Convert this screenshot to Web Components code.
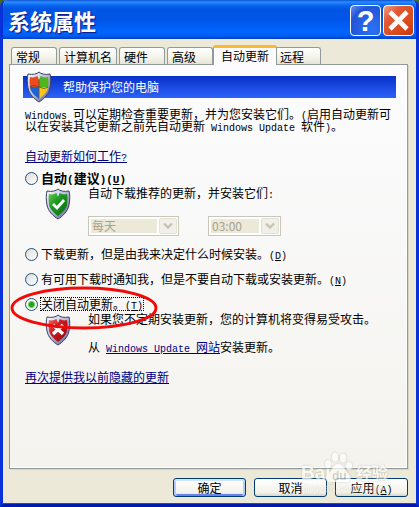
<!DOCTYPE html>
<html lang="zh-CN">
<head>
<meta charset="utf-8">
<meta name="viewport" content="width=device-width, initial-scale=1">
<title>系统属性</title>
<style>
  html, body { height: 100%; }
  body {
    margin: 0;
    background: #40682c;
    color: #000;
    font: 12px/14px "Noto Sans CJK SC", sans-serif;
  }
  p { margin: 0; }
  a { color: #000080; text-decoration: underline; }
  /* half-width latin, 6px per character; must not stretch the line box */
  .en { font-family: "Liberation Mono", monospace; font-size: 10px; line-height: 0; }
  .intro { margin-top: 10px; line-height: 12px; }
  .how { margin-top: 17px; }
  .first { margin-top: 8px; font-size: 13px; font-weight: bold; }
  .first .en { font-size: 11px; }
  .row { margin-top: 11px; }
  .schedule { display: flex; gap: 29px; margin-top: 16px; }
  .visit { margin-top: 14px; }
  .hidden-updates { margin-top: 16px; }
</style>
</head>
<body>

<xp-window heading="系统属性">
  <xp-tabs slot="tabs">
    <xp-tab>常规</xp-tab>
    <xp-tab>计算机名</xp-tab>
    <xp-tab>硬件</xp-tab>
    <xp-tab>高级</xp-tab>
    <xp-tab active>自动更新</xp-tab>
    <xp-tab>远程</xp-tab>
  </xp-tabs>

  <xp-banner>帮助保护您的电脑</xp-banner>
  <p class="intro"><span class="en">Windows </span>可以定期检查重要更新，并为您安装它们。<span class="en">(</span>启用自动更新可以在安装其它更新之前先自动更新<span class="en"> Windows Update </span>软件<span class="en">)</span>。</p>
  <p class="how"><a href="#how">自动更新如何工作<span class="en">?</span></a></p>

  <xp-options>
    <xp-radio class="first" value="auto">自动<span class="en">(</span>建议<span class="en">)(<u>U</u>)</span></xp-radio>
    <xp-detail kind="ok">
      <p>自动下载推荐的更新，并安装它们<span class="en">:</span></p>
      <div class="schedule">
        <xp-select name="日期" value="每天" size="large"></xp-select>
        <xp-select name="时间" value="03:00"></xp-select>
      </div>
    </xp-detail>
    <xp-radio class="row" value="download">下载更新，但是由我来决定什么时候安装。<span class="en">(<u>D</u>)</span></xp-radio>
    <xp-radio class="row" value="notify">有可用下载时通知我，但是不要自动下载或安装更新。<span class="en">(<u>N</u>)</span></xp-radio>
    <xp-radio class="row" value="off" checked circled>关闭自动更新。<span class="en">(<u>T</u>)</span></xp-radio>
    <xp-detail kind="bad">
      <p>如果您不定期安装更新，您的计算机将变得易受攻击。</p>
      <p class="visit">从<span class="en"> </span><a href="#update"><span class="en">Windows Update </span>网站</a>安装更新。</p>
    </xp-detail>
  </xp-options>
  <p class="hidden-updates"><a href="#hidden">再次提供我以前隐藏的更新</a></p>

  <xp-button slot="actions" primary>确定</xp-button>
  <xp-button slot="actions">取消</xp-button>
  <xp-button slot="actions">应用<span class="en">(<u>A</u>)</span></xp-button>
  <xp-watermark slot="mark"></xp-watermark>
</xp-window>

<script>
(function () {
  "use strict";

  function define(name, render, ready) {
    customElements.define(name, class extends HTMLElement {
      connectedCallback() {
        if (this.shadowRoot) return;
        const root = this.attachShadow({ mode: "open" });
        root.innerHTML = render(this);
        if (ready) ready(this, root);
      }
    });
  }

  const SHIELD = "M13 1C15 3 19 4 24 3C25 6 25 12 24 17C23 23 18 28 13 31C8 28 3 23 2 17C1 12 1 6 2 3C7 4 11 3 13 1Z";
  const SHIELD_IN = "M13 4C16 6 19 7 22 6C23 10 22 14 22 17C21 21 17 25 13 28C9 25 5 21 4 17C4 14 3 10 4 6C7 7 10 6 13 4Z";

  define("xp-shield", (el) => {
    const kind = el.getAttribute("kind");
    let art = "";
    if (kind === "ok") {
      art = `<path d="${SHIELD_IN}" fill="url(#g)"/>
        <path d="M8 16L12 20L19 12" fill="none" stroke="#fff" stroke-width="2.8"/>`;
    } else if (kind === "bad") {
      art = `<path d="${SHIELD_IN}" fill="url(#r)"/>
        <path d="M8 11L18 20M18 11L8 20" fill="none" stroke="#fff" stroke-width="3.4"/>`;
    } else {
      art = `<g clip-path="url(#c)">
        <path d="M2 2H13V16H2Z" fill="#ee4b1c"/>
        <path d="M13 2H24V16H13Z" fill="#4fb51c"/>
        <path d="M2 16H13V30H2Z" fill="#1c62d8"/>
        <path d="M13 16H24V30H13Z" fill="#fcc414"/>
        <path d="M3 16Q8 13 13 16T23 16M13 3V29" fill="none" stroke="#5a4a38" stroke-width=".8"/></g>`;
    }
    return `
      <style>
        :host { display: block; flex: none; width: 26px; height: 32px; }
        svg { display: block; }
      </style>
      <svg width="26" height="32" viewBox="0 0 26 32" aria-hidden="true">
        <defs>
          <clipPath id="c"><path d="${SHIELD_IN}"/></clipPath>
          <linearGradient id="s" x2="1" y2="1"><stop stop-color="#fff"/><stop offset=".5" stop-color="#b4b8d8"/><stop offset="1" stop-color="#585c88"/></linearGradient>
          <linearGradient id="g" x2="1" y2="1"><stop stop-color="#6ccc50"/><stop offset=".4" stop-color="#1d9a22"/><stop offset="1" stop-color="#056c0c"/></linearGradient>
          <linearGradient id="r" x2="1" y2="1"><stop stop-color="#f0706a"/><stop offset=".4" stop-color="#cc1c20"/><stop offset="1" stop-color="#8c0610"/></linearGradient>
        </defs>
        <path d="${SHIELD}" fill="url(#s)" stroke="#3c3f5c"/>
        ${art}
        <path d="M11 4L13 2L15 4L13 9Z" fill="#d8dcf0"/>
      </svg>`;
  });

  define("xp-window", (el) => `
    <style>
      :host {
        box-sizing: border-box;
        display: flex;
        flex-direction: column;
        position: relative;
        min-height: 100vh;
        border: solid #0831d9;
        border-width: 0 3px 3px;
        border-bottom-color: #0019b0;
        border-radius: 7px 7px 0 0;
        background: #ece9d8;
        box-shadow: inset 0 -1px #0050ee;
        overflow: hidden;
      }
      header {
        display: flex;
        align-items: center;
        gap: 2px;
        height: 39px;
        margin: 0 -3px;
        padding: 0 5px 0 8px;
        box-sizing: border-box;
        background: linear-gradient(#0a4fd0 0, #2b8cff 2px, #0a68f0 5px, #0054e3 9px, #0056e8 20px, #0066ff 32px, #005cf0 36px, #003fc4);
        color: #fff;
      }
      h1 {
        flex: 1;
        margin: 0;
        font-size: 22px;
        line-height: 30px;
        text-shadow: 1px 1px 1px #0a1883;
      }
      header button {
        width: 31px;
        height: 31px;
        margin-top: 2px;
        padding: 0;
        border: 1px solid #fff;
        border-radius: 4px;
        color: #fff;
        font: bold 29px/28px "Liberation Sans", sans-serif;
      }
      .help { background: radial-gradient(circle at 75% 80%, #2a72f4, #2355d8 70%, #6c92f0); }
      .close { background: linear-gradient(135deg, #f0a088, #e05a34 30%, #d84818 75%, #b83a14); }
      .close svg { display: block; margin: auto; }
      main {
        flex: 1;
        display: flex;
        flex-direction: column;
        padding: 6px 8px 7px 6px;
      }
      section {
        flex: 1;
        border: 1px solid #919b9c;
        padding: 11px 11px 10px 15px;
        background: linear-gradient(#fcfcfe, #f4f3ee);
        box-shadow: 1px 1px #d8d4c0, inset -1px -1px #fff;
      }
      footer {
        display: flex;
        justify-content: flex-end;
        gap: 8px;
        margin-top: 9px;
      }
    </style>
    <header>
      <h1>${el.getAttribute("heading")}</h1>
      <button class="help" aria-label="帮助">?</button>
      <button class="close" aria-label="关闭"><svg width="21" height="21" viewBox="0 0 21 21"><path d="M2 2L19 19M19 2L2 19" stroke="#fff" stroke-width="4.6"/></svg></button>
    </header>
    <main>
      <slot name="tabs"></slot>
      <section><slot></slot></section>
      <footer><slot name="actions"></slot></footer>
    </main>
    <slot name="mark"></slot>`);

  define("xp-tabs", () => `
    <style>
      :host {
        display: flex;
        align-items: flex-end;
        gap: 2px;
        height: 20px;
        margin-bottom: -1px;
        padding-left: 2px;
        position: relative;
      }
    </style>
    <slot></slot>`, (el) => el.setAttribute("role", "tablist"));

  define("xp-tab", (el) => `
    <style>
      :host { display: block; padding-bottom: 1px; }
      button {
        display: block;
        min-width: 46px;
        height: 17px;
        padding: 1px 4px 0;
        border: 1px solid #919b9c;
        border-bottom: 0;
        border-radius: 3px 3px 0 0;
        background: linear-gradient(#fff, #f4f3ea 60%, #e6e4d8);
        color: inherit;
        font: inherit;
        line-height: 14px;
        text-align: left;
        white-space: nowrap;
      }
      :host([active]) { position: relative; z-index: 1; margin: 0 -4px 0 -2px; padding: 0; }
      :host([active]) button {
        height: 20px;
        padding: 0 7px 2px;
        border-top: 3px solid #fcb92c;
        background: #fcfcfe;
      }
    </style>
    <button role="tab" aria-selected="${el.hasAttribute("active")}"><slot></slot></button>`);

  define("xp-banner", () => `
    <style>
      :host {
        display: flex;
        align-items: center;
        gap: 11px;
        height: 22px;
        margin-left: -2px;
        padding-left: 3px;
        background: linear-gradient(#0831c8, #2c62fa);
        color: #fff;
      }
    </style>
    <xp-shield></xp-shield>
    <slot></slot>`);

  define("xp-options", () => `
    <style>:host { display: block; }</style>
    <slot></slot>`, (el) => {
    el.setAttribute("role", "radiogroup");
    // each radio lives in its own shadow tree, so exclusivity is handled here
    el.addEventListener("xp-pick", (e) => {
      el.querySelectorAll("xp-radio").forEach((r) => {
        r.shadowRoot.querySelector("input").checked = r === e.target;
      });
    });
  });

  define("xp-radio", (el) => `
    <style>
      :host { display: block; position: relative; }
      label { display: flex; align-items: center; gap: 2px; line-height: 14px; }
      input {
        appearance: none;
        flex: none;
        width: 13px;
        height: 13px;
        margin: 0;
        border: 1px solid #1d5281;
        border-radius: 50%;
        background: linear-gradient(135deg, #dcdcd7, #fff);
      }
      input:checked {
        background: radial-gradient(circle, #21a121 0 2px, #55d551 3px, #f6f6f2 4px);
      }
      span { padding: 0 1px; white-space: nowrap; }
      :host([circled]) span { outline: 1px dotted #000; outline-offset: -1px; }
      svg { position: absolute; left: -16px; top: -12px; pointer-events: none; z-index: 1; }
    </style>
    <label><input type="radio" name="mode" value="${el.getAttribute("value")}" ${el.hasAttribute("checked") ? "checked" : ""}><span><slot></slot></span></label>
    ${el.hasAttribute("circled") ? `<svg width="150" height="46" viewBox="0 0 150 46" aria-hidden="true"><ellipse cx="75" cy="23" rx="72" ry="20" fill="none" stroke="#f00a0a" stroke-width="3"/></svg>` : ""}`,
  (el, root) => {
    root.querySelector("input").addEventListener("change", () => {
      el.dispatchEvent(new CustomEvent("xp-pick", { bubbles: true }));
    });
  });

  define("xp-detail", (el) => `
    <style>
      :host { display: flex; gap: 17px; padding: 1px 0 0 20px; }
      xp-shield { margin-top: 2px; }
      div { flex: 1; min-width: 0; }
    </style>
    <xp-shield kind="${el.getAttribute("kind")}"></xp-shield>
    <div><slot></slot></div>`);

  define("xp-select", (el) => `
    <style>
      :host {
        display: flex;
        box-sizing: border-box;
        position: relative;
        width: 73px;
        height: 20px;
        padding: 1px;
        border: 1px solid #c9c7ba;
        background: #fff;
      }
      :host([size="large"]) { width: 91px; }
      select {
        appearance: none;
        flex: 1;
        min-width: 0;
        margin: 1px;
        padding: 0 0 0 1px;
        border: 0;
        border-radius: 0;
        background: #ece9d8;
        color: #a5a291;
        opacity: 1;
        font: 12px/14px "Noto Sans CJK SC", sans-serif;
      }
      svg { flex: none; margin-left: 1px; }
    </style>
    <select disabled aria-label="${el.getAttribute("name")}"><option>${el.getAttribute("value")}</option></select>
    <svg width="18" height="16" viewBox="0 0 18 16" aria-hidden="true"><rect x=".5" y=".5" width="17" height="15" rx="1.5" fill="#f0efe8" stroke="#e3e1d6"/><path d="M5 5.5L9 9.5L13 5.5" fill="none" stroke="#c5c3b6" stroke-width="2.4"/></svg>`);

  define("xp-button", () => `
    <style>
      :host { display: block; }
      button {
        display: block;
        width: 73px;
        height: 19px;
        padding: 0;
        border: 1px solid #003c74;
        border-radius: 3px;
        background: linear-gradient(#fff, #f3f2ea 80%, #d8d2c4);
        color: inherit;
        font: inherit;
        line-height: 15px;
      }
      :host([primary]) button { box-shadow: inset 0 2px #cee7ff, inset 2px 0 #b4cdf6, inset -2px 0 #b4cdf6, inset 0 -2px #6982ee; }
    </style>
    <button><slot></slot></button>`);

  define("xp-watermark", () => `
    <style>
      :host {
        display: block;
        position: absolute;
        right: 24px;
        bottom: 4px;
        width: 90px;
        height: 48px;
        pointer-events: none;
        opacity: .7;
      }
      svg { display: block; filter: drop-shadow(0 0 1px #b4b09e); }
      text { fill: #fff; font-family: "Liberation Sans", sans-serif; font-weight: bold; }
      .cjk { font-family: "Noto Sans CJK SC", sans-serif; }
      .du { fill: #c9c7bc; }
      .url { font-weight: normal; opacity: .6; }
    </style>
    <svg width="90" height="48" viewBox="0 0 90 48">
      <g fill="#fff"><ellipse cx="26" cy="12" rx="3" ry="4"/><ellipse cx="33" cy="5" rx="3" ry="4.5"/><ellipse cx="41" cy="6" rx="3" ry="4.5"/><ellipse cx="47" cy="14" rx="3" ry="4"/><path d="M36 12C42 12 42 18 47 22C51 28 47 32 41 30H31C25 32 22 27 26 22C31 18 31 12 36 12Z"/></g>
      <text x="-1" y="27" font-size="19">Bai</text>
      <text class="du" x="30" y="28" font-size="12">du</text>
      <text class="cjk" x="54" y="27" font-size="16">经验</text>
      <text class="url" x="1" y="40" font-size="10">jingyan.baidu.com</text>
    </svg>`);
})();
</script>
</body>
</html>
